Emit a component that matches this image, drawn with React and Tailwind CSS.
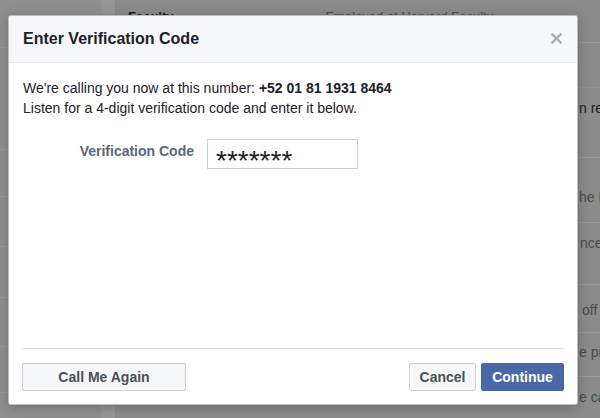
import React from "react";

function SideRow({ h }) {
  return <div className={`border-b border-[#9a9a9a] ${h}`} />;
}

export default function App() {
  return (
    <div className="relative w-[600px] h-[418px] overflow-hidden bg-[#8c8c8c] font-['Liberation_Sans',Arial,sans-serif]">
      {/* backdrop page */}
      <div className="flex h-full">
        <div className="w-[101px] shrink-0 flex flex-col bg-[#8f8f8f]">
          <SideRow h="h-[48px]" />
          <SideRow h="h-[102px]" />
          <SideRow h="h-[47px]" />
          <SideRow h="h-[50px]" />
          <SideRow h="h-[51px]" />
          <SideRow h="h-[49px]" />
          <SideRow h="h-[46px]" />
        </div>
        <div className="w-[14px] shrink-0 bg-[#959595]" />
        <div className="flex-1 min-w-0 flex flex-col bg-[#8b8b8b] text-[14px] leading-[16px] whitespace-nowrap">
          <div className="h-[43px] shrink-0 border-b border-[#9a9a9a] flex pt-[9px]">
            <span className="ml-[13px] font-bold text-[#1e1e1e] text-[13px]">Faculty</span>
            <span className="ml-[152px] text-[#4a4a4a] text-[13px]">Employed at Harvard Faculty</span>
          </div>
          <div className="h-[45px] shrink-0 border-b border-[#939393]" />
          <div className="h-[70px] shrink-0 border-b border-[#9a9a9a] pt-[12px] pl-[464px] text-[#1b1b1b]">n re</div>
          <div className="h-[65px] shrink-0 border-b border-[#9a9a9a] pt-[31px] pl-[464px] text-[#4a4a4a]">he F</div>
          <div className="h-[62px] shrink-0 border-b border-[#9a9a9a] pt-[12px] pl-[465px] text-[#4a4a4a]">nce</div>
          <div className="h-[48px] shrink-0 border-b border-[#9a9a9a] pt-[17px] pl-[467px] text-[#4a4a4a]">off f</div>
          <div className="h-[44px] shrink-0 border-b border-[#9a9a9a] pt-[11px] pl-[464px] text-[#4a4a4a]">e pr</div>
          <div className="flex-1 pt-[12px] pl-[464px] text-[#4a4a4a]">e ca</div>
        </div>
      </div>

      {/* dialog */}
      <div className="absolute left-[8px] top-[15px] w-[570px] h-[390px] bg-white rounded-[3px] border border-[rgba(0,0,0,0.25)] shadow-[0_2px_12px_rgba(0,0,0,0.25)] flex flex-col overflow-hidden">
        <div className="h-[47px] shrink-0 bg-[#f6f7f9] border-b border-[#e5e5e5] flex items-center justify-between pl-[14px] pr-[15px]">
          <div className="text-[16px] font-bold text-[#1d2129] leading-[20px] -mt-[1px]">Enter Verification Code</div>
          <svg width="11" height="11" viewBox="0 0 11 11" className="-mt-[1px]">
            <path d="M1.5 1.5 L9.5 9.5 M9.5 1.5 L1.5 9.5" stroke="#a9abaf" strokeWidth="2.3" strokeLinecap="square" />
          </svg>
        </div>

        <div className="flex-1 px-[14px] pt-[15px] text-[14px] leading-[20px] text-[#1d2129]">
          <div>
            We're calling you now at this number: <span className="font-bold">+52 01 81 1931 8464</span>
          </div>
          <div>Listen for a 4-digit verification code and enter it below.</div>
          <div className="flex mt-[21px]">
            <div className="w-[171px] text-right font-bold text-[#606770] leading-[16px] pt-[4px]">Verification Code</div>
            <div className="ml-[13px] w-[151px] h-[30px] border border-[#ccd0d5] bg-white pl-[8px] pt-[14px] text-[28px] leading-[14px] text-[#1d2129]">
              *******
            </div>
          </div>
        </div>

        <div className="shrink-0">
          <div className="mx-[13px] h-px bg-[#dddfe2]" />
          <div className="flex items-center px-[13px] pt-[14px] pb-[13px]">
            <button className="w-[164px] h-[28px] rounded-[2px] border border-[#ced0d4] bg-[#f6f7f9] text-[14px] font-bold text-[#4b4f56] leading-[26px]">
              Call Me Again
            </button>
            <div className="flex-1" />
            <button className="w-[67px] h-[28px] rounded-[2px] border border-[#ced0d4] bg-[#f6f7f9] text-[14px] font-bold text-[#4b4f56] leading-[26px]">
              Cancel
            </button>
            <button className="ml-[5px] w-[83px] h-[28px] rounded-[2px] border border-[#4267b2] bg-[#4a67a8] text-[14px] font-bold text-white leading-[26px]">
              Continue
            </button>
          </div>
        </div>
      </div>
    </div>
  );
}
